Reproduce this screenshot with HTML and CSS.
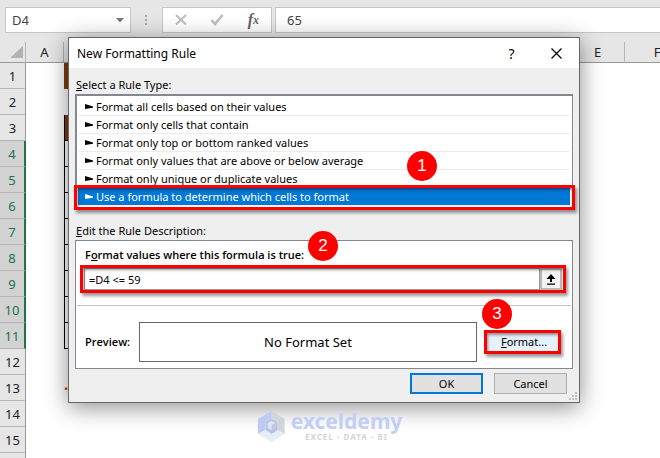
FILE: index.html
```html
<!DOCTYPE html>
<html lang="en">
<head>
  <meta charset="UTF-8">
  <title>New Formatting Rule</title>
  <meta name="viewport" content="width=device-width, initial-scale=1.0">
  <link rel="stylesheet" href="styles.css">
</head>
<body>
  <!-- formula bar -->
  <div class="formula-bar">
    <div class="name-box">
      <input type="text" value="D4" aria-label="Name box">
      <button class="plain" aria-label="Show names">
        <svg width="8" height="5" viewBox="0 0 8 5"><path d="M0 0h8L4 4.5z" fill="#777"/></svg>
      </button>
    </div>
    <svg class="dots" width="3" height="11" viewBox="0 0 3 11"><path d="M0 0h2v2H0zM0 4h2v2H0zM0 8h2v2H0z" fill="#a6a6a6"/></svg>
    <div class="entry-buttons">
      <button class="plain" aria-label="Cancel entry">
        <svg width="12" height="12" viewBox="0 0 12 12"><path d="M1 1l10 9.500M11 1L1 10.500" fill="none" stroke="#bdbdbd" stroke-width="2"/></svg>
      </button>
      <button class="plain" aria-label="Enter">
        <svg width="14" height="12" viewBox="0 0 14 12"><path d="M1.500 6l3.500 4 7.500-9" fill="none" stroke="#bdbdbd" stroke-width="2.600"/></svg>
      </button>
      <button class="plain fx" aria-label="Insert function">f<sub>x</sub></button>
    </div>
    <input class="formula-input" type="text" value="65" aria-label="Formula bar">
  </div>

  <!-- worksheet -->
  <table class="sheet">
    <colgroup>
      <col class="col-head"><col class="col-a"><col><col><col><col class="col-e"><col class="col-f">
    </colgroup>
    <thead>
      <tr>
        <th class="corner"><svg width="13" height="13" viewBox="0 0 13 13"><path d="M13 0v12H0z" fill="#b2b2b2"/></svg></th>
        <th>A</th><th></th><th></th><th></th><th>E</th><th>F</th>
      </tr>
    </thead>
    <tbody>
      <tr><th>1</th><td></td><td class="banner" colspan="3"></td><td></td><td></td></tr>
      <tr class="above-cells"><th>2</th><td></td><td></td><td></td><td></td><td></td><td></td></tr>
      <tr><th>3</th><td></td><td class="banner cell"></td><td class="banner cell"></td><td class="banner cell"></td><td></td><td></td></tr>
      <tr class="picked"><th>4</th><td></td><td class="cell"></td><td class="cell"></td><td class="cell"></td><td></td><td></td></tr>
      <tr class="picked"><th>5</th><td></td><td class="cell"></td><td class="cell"></td><td class="cell"></td><td></td><td></td></tr>
      <tr class="picked"><th>6</th><td></td><td class="cell"></td><td class="cell"></td><td class="cell"></td><td></td><td></td></tr>
      <tr class="picked"><th>7</th><td></td><td class="cell"></td><td class="cell"></td><td class="cell"></td><td></td><td></td></tr>
      <tr class="picked"><th>8</th><td></td><td class="cell"></td><td class="cell"></td><td class="cell"></td><td></td><td></td></tr>
      <tr class="picked"><th>9</th><td></td><td class="cell"></td><td class="cell"></td><td class="cell"></td><td></td><td></td></tr>
      <tr class="picked"><th>10</th><td></td><td class="cell"></td><td class="cell"></td><td class="cell"></td><td></td><td></td></tr>
      <tr class="picked"><th>11</th><td></td><td class="cell"></td><td class="cell"></td><td class="cell"></td><td></td><td></td></tr>
      <tr><th>12</th><td></td><td></td><td></td><td></td><td></td><td></td></tr>
      <tr><th>13</th><td></td><td class="note">•</td><td></td><td></td><td></td><td></td></tr>
      <tr><th>14</th><td></td><td></td><td></td><td></td><td></td><td></td></tr>
      <tr><th>15</th><td></td><td></td><td></td><td></td><td></td><td></td></tr>
      <tr><th></th><td></td><td></td><td></td><td></td><td></td><td></td></tr>
    </tbody>
  </table>

  <!-- dialog -->
  <form class="dialog" role="dialog" aria-labelledby="dialog-title">
    <div class="title-bar">
      <span id="dialog-title">New Formatting Rule</span>
      <button type="button" class="plain help" aria-label="Help">?</button>
      <button type="button" class="plain close" aria-label="Close">
        <svg width="11" height="11" viewBox="0 0 11 11"><path d="M.5.5l10 10M10.500.5l-10 10" fill="none" stroke="#000" stroke-width="1.200"/></svg>
      </button>
    </div>

    <div class="dialog-body">
      <div class="label" id="type-label"><u>S</u>elect a Rule Type:</div>
      <div class="rule-list" role="radiogroup" aria-labelledby="type-label">
        <label class="rule"><input type="radio" name="rule">Format all cells based on their values</label>
        <label class="rule"><input type="radio" name="rule">Format only cells that contain</label>
        <label class="rule"><input type="radio" name="rule">Format only top or bottom ranked values</label>
        <label class="rule"><input type="radio" name="rule">Format only values that are above or below average</label>
        <label class="rule"><input type="radio" name="rule">Format only unique or duplicate values</label>
        <label class="rule"><input type="radio" name="rule" checked>Use a formula to determine which cells to format</label>
        <span class="mark mark-rule"></span>
        <span class="badge badge-1">1</span>
      </div>

      <div class="label"><u>E</u>dit the Rule Description:</div>
      <div class="description">
        <label class="bold" for="formula">F<u>o</u>rmat values where this formula is true:</label>
        <div class="formula-row">
          <input id="formula" type="text" value="=D4 &lt;= 59">
          <button type="button" class="collapse" aria-label="Collapse dialog">
            <svg width="10" height="11" viewBox="0 0 10 11"><path d="M5 0l4.500 5H6v3H4V5H.5zM1 9.500h8v1.200H1z" fill="#000"/></svg>
          </button>
          <span class="mark mark-formula"></span>
          <span class="badge badge-2">2</span>
        </div>
        <hr>
        <div class="preview-row">
          <span class="bold">Preview:</span>
          <div class="preview">No Format Set</div>
          <div class="format-wrap">
            <button type="button" class="format"><u>F</u>ormat...</button>
            <span class="mark mark-format"></span>
            <span class="badge badge-3">3</span>
          </div>
        </div>
      </div>

      <div class="actions">
        <button type="button" class="ok">OK</button>
        <button type="button">Cancel</button>
      </div>
    </div>
    <svg class="grip" width="8" height="8" viewBox="0 0 8 8"><path d="M6 0h2v2H6zM3 3h2v2H3zM6 3h2v2H6zM0 6h2v2H0zM3 6h2v2H3zM6 6h2v2H6z" fill="#bfbfbf"/></svg>
  </form>

  <!-- watermark -->
  <div class="watermark">
    <svg width="28" height="32" viewBox="0 0 28 32">
      <path d="M14 0L0 8v15l8-4v-8l6-3z" fill="#bccaf5"/>
      <path d="M14 0l13 8v15l-7-4v-8l-6-3z" fill="#d0d5da"/>
      <path d="M0 23l14 8 13-8-7-4-6 4-6-4z" fill="#e4eff4"/>
      <path d="M14 8l-6 3v8l6 4 6-4v-8z" fill="#b3c3ef"/>
      <path d="M14 10l4 2v5l-4 2-4-2v-5z" fill="#dfe5ee"/>
      <path d="M14 14l4-2v5l-4 2z" fill="#c3c9d3"/>
    </svg>
    <div>
      <div class="brand">exceldemy</div>
      <div class="tagline">EXCEL - DATA - BI</div>
    </div>
  </div>
</body>
</html>
```
FILE: styles.css
```css
* {
  box-sizing: border-box;
}

body {
  margin: 0;
  position: relative;
  height: 100vh;
  overflow: hidden;
  background-color: #e6e6e6;
  font-family: "Noto Sans", "Open Sans", sans-serif;
  font-size: 11px;
  color: #000;
}

button,
input {
  font: inherit;
  color: inherit;
}

svg {
  display: block;
}

.plain {
  display: flex;
  align-items: center;
  justify-content: center;
  padding: 0;
  border: none;
  background: none;
}

/* formula bar */
.formula-bar {
  display: flex;
  align-items: center;
  height: 42px;
  padding: 7px 0 9px 5px;
  color: #444;
  font-size: 13px;
}

.name-box,
.entry-buttons,
.formula-input {
  height: 26px;
  border: 1px solid #c6c6c6;
  background-color: #fff;
}

.name-box {
  display: flex;
  width: 126px;
}

.name-box input {
  flex: 1;
  min-width: 0;
  padding: 0 6px;
  border: none;
  background: none;
}

.name-box button {
  width: 20px;
}

.dots {
  margin: 0 14px;
}

.entry-buttons {
  display: flex;
  justify-content: space-between;
  width: 110px;
  margin-right: 3px;
  padding: 0 12px;
}

.fx {
  font-family: "Liberation Serif", serif;
  font-size: 16px;
  font-style: italic;
  font-weight: bold;
  color: #666;
}

.fx sub {
  font-size: 12px;
}

.formula-input {
  flex: 1;
  min-width: 0;
  padding: 0 11px;
  border-right: none;
}

/* worksheet */
.sheet {
  width: calc(100% + 30px);
  table-layout: fixed;
  border-collapse: separate;
  border-spacing: 0;
  background-color: #fff;
}

.col-head {
  width: 26px;
}

.col-a {
  width: 38px;
}

.col-e {
  width: 54px;
}

.col-f {
  width: 65px;
}

.sheet th,
.sheet td {
  height: 26px;
  padding: 0;
}

.sheet th {
  border-right: 1px solid #999;
  border-bottom: 1px solid #b5b5b5;
  background-color: #e6e6e6;
  font-size: 13px;
  line-height: 20px;
  font-weight: normal;
  color: #222;
}

.sheet thead th {
  height: 21px;
  border-right-color: #b5b5b5;
  border-bottom-color: #999;
}

.corner svg {
  margin-left: 10px;
}

.sheet .picked th {
  border-right: 2px solid #217346;
  background-color: #d2d2d2;
  color: #217346;
}

.sheet .banner {
  background-color: #84390c;
}

.sheet .cell {
  border-left: 1px solid #000;
  border-bottom: 1px solid #000;
}

.note {
  color: #d83b01;
}

/* dialog */
.dialog {
  position: absolute;
  top: 37px;
  left: 68px;
  right: 80px;
  border: 1px solid #666;
  background-color: #efefef;
  box-shadow: 0 4px 22px rgba(0, 0, 0, 0.45);
}

.title-bar {
  display: flex;
  align-items: center;
  height: 30px;
  padding: 0 9px 0 8px;
  background-color: #fff;
  font-size: 12px;
}

.title-bar span {
  flex: 1;
}

.title-bar button {
  width: 27px;
  height: 28px;
}

.title-bar .help {
  margin-right: 18px;
  font-size: 14px;
}

.dialog-body {
  padding: 8px 6px;
}

.label {
  height: 18px;
  padding-left: 1px;
  line-height: 18px;
}

.rule-list {
  position: relative;
  margin-bottom: 14px;
  padding: 2px 2px 1px 1px;
  border: 2px solid #828790;
  border-right-width: 1px;
  border-bottom-width: 1px;
  background-color: #fff;
}

.rule {
  display: flex;
  align-items: center;
  height: 18px;
  padding-left: 7px;
  border-bottom: 1px solid #ececec;
}

.rule:has(input:checked) {
  background-color: #0078d7;
  color: #fff;
}

.rule input {
  appearance: none;
  width: 8px;
  height: 5px;
  margin: 0 3px 0 0;
  background-color: currentColor;
  clip-path: polygon(0 0, 100% 50%, 100% 75%, 0 100%);
}

.description {
  padding: 6px 1px;
  border: 1px solid #828790;
  background-color: #fff;
}

.bold {
  display: block;
  padding-left: 8px;
  line-height: 16px;
  font-family: "Open Sans", sans-serif;
  font-weight: 600;
}

.formula-row {
  position: relative;
  display: flex;
  height: 22px;
  margin: 5px 9px 15px 7px;
}

.formula-row input {
  flex: 1;
  min-width: 0;
  padding: 0 4px;
  border: 1px solid #999;
  background-color: #fff;
}

.collapse {
  display: flex;
  align-items: center;
  justify-content: center;
  width: 22px;
  padding: 0;
  border: 2px solid #b9b9b9;
  background-color: #f4f4f4;
}

hr {
  margin: 0 0 16px;
  border: none;
  border-top: 1px solid #c4c4c4;
}

.preview-row {
  display: flex;
  align-items: center;
}

.preview-row .bold {
  width: 62px;
}

.preview {
  flex: 1;
  height: 40px;
  border: 1px solid #666;
  font-size: 13px;
  line-height: 38px;
  text-align: center;
}

.format-wrap {
  position: relative;
  margin: 0 10px 0 7px;
}

.dialog-body button:not(.collapse) {
  width: 73px;
  height: 21px;
  padding: 0;
  border: 1px solid #adadad;
  background-color: #e1e1e1;
  line-height: 18px;
}

.dialog-body .format-wrap .format {
  display: block;
  width: 77px;
  height: 22px;
  padding-left: 3px;
  border-color: #0078d7;
  background-color: #e5f1fb;
}

.actions {
  display: flex;
  justify-content: flex-end;
  gap: 11px;
  margin: 4px 6px 0 0;
}

.dialog-body .actions .ok {
  border: 2px solid #0078d7;
}

.grip {
  position: absolute;
  right: 2px;
  bottom: 2px;
}

/* numbered callouts */
.mark {
  position: absolute;
  border: 3px solid #f00;
  box-shadow: 2px 3px 3px rgba(0, 0, 0, 0.4), inset 1px 2px 3px rgba(0, 0, 0, 0.4);
  pointer-events: none;
}

.mark-rule {
  left: -3px;
  right: -3px;
  bottom: -3px;
  height: 25px;
}

.mark-formula {
  inset: -3px -4px;
}

.mark-format {
  inset: -1px 0;
}

.badge {
  position: absolute;
  width: 30px;
  height: 30px;
  border-radius: 50%;
  background-color: #f00;
  color: #fff;
  font-family: "Liberation Sans", Arial, sans-serif;
  font-size: 17px;
  line-height: 30px;
  text-align: center;
}

.badge-1 {
  top: 55px;
  right: 135px;
}

.badge-2 {
  top: -37px;
  left: 224px;
}

.badge-3 {
  top: -32px;
  left: -2px;
}

/* watermark */
.watermark {
  position: absolute;
  top: 411px;
  left: 50%;
  display: flex;
  gap: 5px;
  transform: translateX(-50%);
  color: #c3cef5;
}

.brand {
  font-family: "Noto Sans", sans-serif;
  font-size: 21px;
  font-weight: bold;
  line-height: 20px;
}

.tagline {
  font-size: 8px;
  font-weight: bold;
  line-height: 11px;
  letter-spacing: 1px;
  text-align: center;
  color: #d3d5d9;
}
```
